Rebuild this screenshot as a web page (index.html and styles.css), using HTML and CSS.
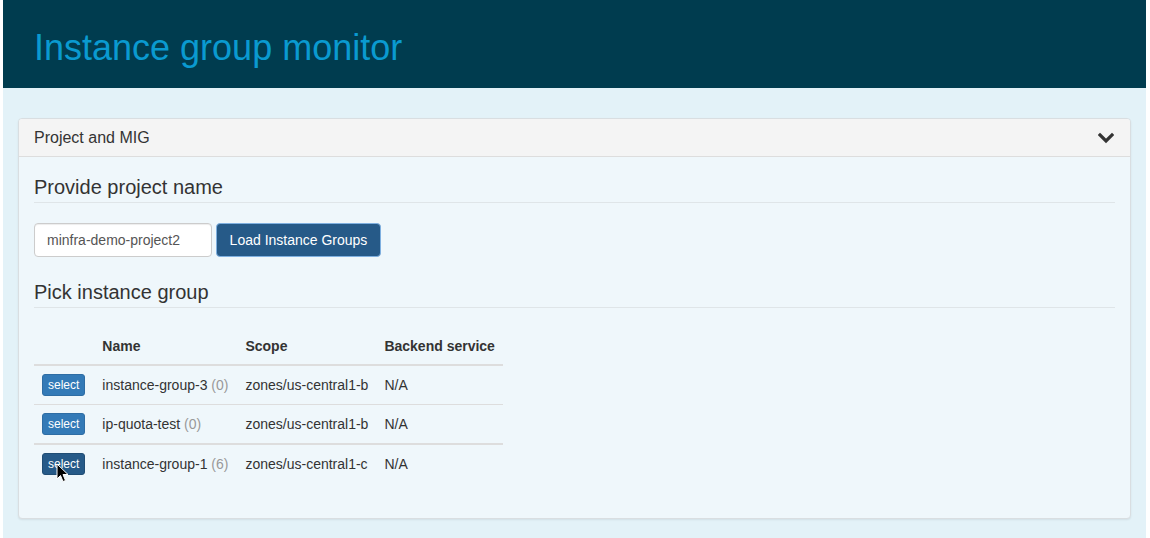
FILE: index.html
```html
<!DOCTYPE html>
<html>
<head>
<meta charset="utf-8">
<title>Instance group monitor</title>
<link rel="stylesheet" href="styles.css">
</head>
<body>
<div class="page">
  <header class="topbar">
    <h1 class="title">Instance group monitor</h1>
  </header>
  <main class="main">
    <section class="panel">
      <div class="panel-heading">
        <span class="panel-title">Project and MIG</span>
        <svg class="chevron" width="16" height="12" viewBox="0 0 16 12"><polyline points="2,3 8,9 14,3" fill="none" stroke="#333" stroke-width="3.2" stroke-linecap="square"/></svg>
      </div>
      <div class="panel-body">
        <h3 class="section-title">Provide project name</h3>
        <div class="form-row">
          <input class="text-input" type="text" value="minfra-demo-project2">
          <button class="btn-load">Load Instance Groups</button>
        </div>
        <h3 class="section-title pick">Pick instance group</h3>
        <table class="groups">
          <thead>
            <tr><th class="c-btn"></th><th class="c-name">Name</th><th>Scope</th><th>Backend service</th></tr>
          </thead>
          <tbody>
            <tr><td class="c-btn"><button class="btn-select">select</button></td><td class="c-name">instance-group-3 <span class="count">(0)</span></td><td>zones/us-central1-b</td><td>N/A</td></tr>
            <tr><td class="c-btn"><button class="btn-select">select</button></td><td class="c-name">ip-quota-test <span class="count">(0)</span></td><td>zones/us-central1-b</td><td>N/A</td></tr>
          </tbody>
          <tbody>
            <tr><td class="c-btn cursor-cell"><button class="btn-select active">select</button>
              <svg class="cursor" width="13" height="21" viewBox="0 0 13 21"><path d="M1 1 L1 16 L4.5 12.5 L7 18.5 L9.5 17.5 L7 11.5 L12 11.5 Z" fill="#000" stroke="#fff" stroke-width="1"/></svg>
            </td><td class="c-name">instance-group-1 <span class="count">(6)</span></td><td>zones/us-central1-c</td><td>N/A</td></tr>
          </tbody>
        </table>
      </div>
    </section>
  </main>
</div>
</body>
</html>
```
FILE: styles.css
```css
html, body {
  margin: 0;
  padding: 0;
  background: #ffffff;
}
body {
  font-family: "Liberation Sans", Arial, Helvetica, sans-serif;
  font-size: 14px;
  color: #333;
}
.page {
  margin: 0 4px 0 3px;
  height: 538px;
  background: #e3f2f8;
  display: flex;
  flex-direction: column;
  overflow: hidden;
}
.topbar {
  flex-shrink: 0;
  background: #003c4f;
  height: 88px;
  padding-left: 31px;
  box-sizing: border-box;
}
.title {
  margin: 0;
  padding-top: 28px;
  font-weight: normal;
  font-size: 36px;
  line-height: 40px;
  color: #0a9ad0;
}
.main {
  flex-shrink: 0;
  padding: 30px 15px 20px 15px;
}
.panel {
  background: #eff7fb;
  border: 1px solid #d9dee1;
  border-radius: 4px;
  box-shadow: 0 1px 2px rgba(0,0,0,0.08);
}
.panel-heading {
  background: #f4f4f4;
  border-bottom: 1px solid #dddddd;
  border-radius: 3px 3px 0 0;
  padding: 9px 15px 8px 15px;
  height: 20px;
  display: flex;
  align-items: center;
  justify-content: space-between;
}
.panel-title {
  font-size: 16px;
  line-height: 20px;
  color: #333;
}
.chevron {
  display: block;
  margin-right: 1px;
}
.panel-body {
  padding: 15px;
}
.section-title {
  margin: 0;
  font-weight: normal;
  font-size: 20px;
  line-height: 22px;
  padding-top: 4px;
  padding-bottom: 4px;
  border-bottom: 1px solid #dfe5e8;
  color: #333;
}
.section-title.pick {
  margin-top: 20px;
}
.form-row {
  margin-top: 20px;
  display: flex;
  gap: 4px;
}
.text-input {
  width: 178px;
  height: 34px;
  box-sizing: border-box;
  border: 1px solid #cccccc;
  border-radius: 4px;
  background: #fff;
  padding: 6px 12px;
  font-family: "Liberation Sans", Arial, sans-serif;
  font-size: 14px;
  color: #555;
  box-shadow: inset 0 1px 1px rgba(0,0,0,0.075);
}
.btn-load {
  height: 34px;
  width: 165px;
  box-sizing: border-box;
  background: #265a88;
  border: 1px solid #7fb0e0;
  border-radius: 4px;
  color: #fff;
  font-family: "Liberation Sans", Arial, sans-serif;
  font-size: 14px;
  padding: 6px 12px;
}
.groups {
  margin-top: 20px;
  margin-bottom: 20px;
  border-collapse: collapse;
  border-spacing: 0;
}
.groups th {
  text-align: left;
  font-weight: bold;
  padding: 8px;
  line-height: 20px;
  border-bottom: 2px solid #dddddd;
  vertical-align: bottom;
}
.groups td {
  padding: 8px;
  line-height: 22px;
  border-top: 1px solid #dddddd;
  vertical-align: top;
  white-space: nowrap;
}
.groups .c-btn,
.groups .c-name {
  padding-right: 9px;
}
.groups tbody + tbody tr td {
  border-top: 2px solid #dddddd;
}
.count {
  color: #999;
}
.btn-select {
  display: block;
  background: #337ab7;
  border: 1px solid #2e6da4;
  border-radius: 3px;
  color: #fff;
  font-family: "Liberation Sans", Arial, sans-serif;
  font-size: 12px;
  line-height: 18px;
  padding: 1px 5px;
  height: 22px;
  box-sizing: border-box;
}
.btn-select.active {
  background: #265a88;
  border-color: #204d74;
}
.cursor-cell {
  position: relative;
}
.cursor {
  position: absolute;
  left: 22px;
  top: 18px;
}
```
